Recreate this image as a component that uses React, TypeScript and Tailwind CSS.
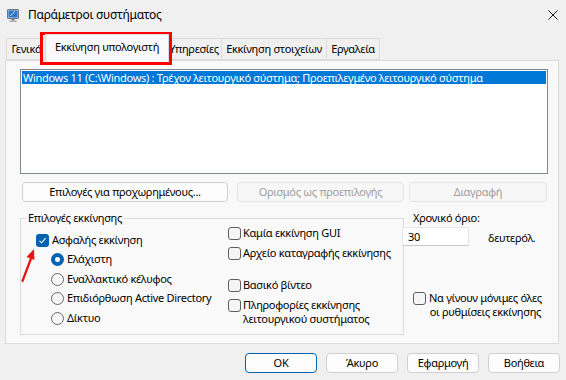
import React from 'react';

const font = { fontFamily: '"Noto Sans", "Liberation Sans", sans-serif' };

const CheckBox = ({ checked = false }: { checked?: boolean }) =>
  checked ? (
    <span className="flex h-[13px] w-[13px] shrink-0 items-center justify-center rounded-[3px] bg-[#0063b1]">
      <svg width="9" height="9" viewBox="0 0 9 9">
        <path d="M1.5 4.8 L3.6 6.8 L7.6 2.2" fill="none" stroke="#fff" strokeWidth="1.1" />
      </svg>
    </span>
  ) : (
    <span className="block h-[13px] w-[13px] shrink-0 rounded-[3px] border border-[#5f5f5f] bg-[#f5f5f5]" />
  );

const Radio = ({ checked = false }: { checked?: boolean }) =>
  checked ? (
    <span className="flex h-[13px] w-[13px] shrink-0 items-center justify-center rounded-full bg-[#0063b1]">
      <span className="h-[5px] w-[5px] rounded-full bg-white" />
    </span>
  ) : (
    <span className="block h-[13px] w-[13px] shrink-0 rounded-full border border-[#6a6a6a] bg-[#f5f5f5]" />
  );

const Button = ({
  label,
  w,
  disabled = false,
  primary = false,
}: {
  label: string;
  w: string;
  disabled?: boolean;
  primary?: boolean;
}) => (
  <div
    className={
      'flex h-[20px] shrink-0 items-center justify-center whitespace-nowrap rounded-[4px] border ' +
      w +
      (disabled
        ? ' border-[#e3e3e3] bg-[#f7f7f7] text-[#9d9d9d]'
        : primary
          ? ' border-[#0063b1] bg-[#fdfdfd] text-black'
          : ' border-[#d0d0d0] bg-[#fdfdfd] text-black')
    }
  >
    {label}
  </div>
);

const Tab = ({ label, w, active = false }: { label: string; w: string; active?: boolean }) =>
  active ? (
    <div
      className={
        'relative z-10 -mb-px -ml-[2px] flex h-[27px] shrink-0 items-center justify-center whitespace-nowrap border border-b-0 border-[#dcdcdc] bg-[#f9f9f9] pb-[3px] ' +
        w
      }
    >
      {label}
    </div>
  ) : (
    <div
      className={
        'flex h-[22px] shrink-0 items-center justify-center whitespace-nowrap border border-[#dcdcdc] bg-[#f0f0f0] ' +
        w
      }
    >
      {label}
    </div>
  );

export default function App() {
  return (
    <div
      className="relative flex h-[380px] w-[566px] flex-col overflow-hidden bg-[#f0f0f0] text-[11px] leading-[14px] tracking-[-0.3px] whitespace-nowrap text-black"
      style={font}
    >
      {/* title bar */}
      <div className="flex h-[30px] shrink-0 items-center pl-[7px]">
        <svg width="12" height="13" viewBox="0 0 12 13">
          <rect x="0.5" y="0.5" width="11" height="9" rx="0.5" fill="#cfd6df" stroke="#6f7782" />
          <rect x="1.5" y="1.5" width="9" height="7" fill="#2f73c9" />
          <path d="M3 7 L8 2.5" stroke="#cfe6ff" strokeWidth="1" />
          <rect x="4.5" y="10" width="3" height="1.5" fill="#7c838c" />
          <rect x="2.5" y="11.5" width="7" height="1.3" fill="#9aa1a9" />
        </svg>
        <span className="ml-[9px] text-[12px] tracking-[-0.3px]">Παράμετροι συστήματος</span>
        <svg className="ml-auto mr-[8px]" width="10" height="10" viewBox="0 0 10 10">
          <path d="M0.5 0.5 L9.5 9.5 M9.5 0.5 L0.5 9.5" stroke="#1b1b1b" strokeWidth="1" />
        </svg>
      </div>

      {/* tabs */}
      <div className="ml-[6px] flex h-[30px] shrink-0 items-end">
        <Tab label="Γενικά" w="w-[41px]" />
        <Tab label="Εκκίνηση υπολογιστή" w="w-[124px]" active />
        <div className="-ml-[2px] flex">
          <Tab label="Υπηρεσίες" w="w-[55px] border-l-0" />
          <Tab label="Εκκίνηση στοιχείων" w="w-[105px] border-l-0" />
          <Tab label="Εργαλεία" w="w-[53px] border-l-0" />
        </div>
      </div>

      {/* tab panel */}
      <div className="ml-[5px] flex h-[284px] w-[554px] shrink-0 flex-col border border-[#dcdcdc] bg-[#f9f9f9]">
        <div className="ml-[14px] mt-[8px] h-[105px] w-[528px] overflow-hidden border border-[#828790] bg-white p-px">
          <div className="h-[13px] bg-[#0078d7] pl-[1px] leading-[13px] text-white">
            Windows 11 (C:\Windows) : Τρέχον λειτουργικό σύστημα; Προεπιλεγμένο λειτουργικό σύστημα
          </div>
        </div>

        <div className="mt-[8px] flex pl-[16px]">
          <Button label="Επιλογές για προχωρημένους..." w="w-[206px]" />
          <div className="ml-[9px]">
            <Button label="Ορισμός ως προεπιλογής" w="w-[167px]" disabled />
          </div>
          <div className="ml-[5px]">
            <Button label="Διαγραφή" w="w-[138px]" disabled />
          </div>
        </div>

        <div className="mt-[9px] flex">
          <fieldset className="ml-[14px] h-[124px] w-[384px] shrink-0 border border-[#dcdcdc]">
            <legend className="ml-[5px] px-[2px] leading-[14px]">Επιλογές εκκίνησης</legend>
            <div className="flex">
              <div className="flex w-[207px] shrink-0 flex-col pl-[15px] pt-[8px]">
                <div className="flex h-[14px] items-center gap-[3px]">
                  <CheckBox checked />
                  <span>Ασφαλής εκκίνηση</span>
                </div>
                <div className="mt-[5px] flex h-[14px] items-center gap-[3px] pl-[15px]">
                  <Radio checked />
                  <span>Ελάχιστη</span>
                </div>
                <div className="mt-[6px] flex h-[14px] items-center gap-[3px] pl-[15px]">
                  <Radio />
                  <span>Εναλλακτικό κέλυφος</span>
                </div>
                <div className="mt-[5px] flex h-[14px] items-center gap-[3px] pl-[15px]">
                  <Radio />
                  <span>Επιδιόρθωση Active Directory</span>
                </div>
                <div className="mt-[6px] flex h-[14px] items-center gap-[3px] pl-[15px]">
                  <Radio />
                  <span>Δίκτυο</span>
                </div>
              </div>

              <div className="flex flex-col pt-[1px]">
                <div className="flex h-[14px] items-center gap-[2px]">
                  <CheckBox />
                  <span>Καμία εκκίνηση GUI</span>
                </div>
                <div className="mt-[6px] flex h-[14px] items-center gap-[2px]">
                  <CheckBox />
                  <span>Αρχείο καταγραφής εκκίνησης</span>
                </div>
                <div className="mt-[18px] flex h-[14px] items-center gap-[2px]">
                  <CheckBox />
                  <span>Βασικό βίντεο</span>
                </div>
                <div className="mt-[6px] flex items-start gap-[2px]">
                  <span className="mt-px shrink-0">
                    <CheckBox />
                  </span>
                  <span className="leading-[14px]">
                    Πληροφορίες εκκίνησης
                    <br />
                    λειτουργικού συστήματος
                  </span>
                </div>
              </div>
            </div>
          </fieldset>

          <div className="flex flex-col">
            <div className="pl-[9px]">Χρονικό όριο:</div>
            <div className="mt-[2px] flex items-center">
              <div className="relative z-10 -ml-[2px] flex h-[19px] w-[67px] shrink-0 items-center border border-[#e6e6e6] border-b-[#c8c8c8] bg-white pl-[5px]">
                30
              </div>
              <span className="ml-[19px] mt-[2px]">δευτερόλ.</span>
            </div>
            <div className="mt-[45px] flex items-start gap-[3px] pl-[9px]">
              <span className="mt-px shrink-0">
                <CheckBox />
              </span>
              <span className="text-center leading-[14px]">
                Να γίνουν μόνιμες όλες
                <br />
                οι ρυθμίσεις εκκίνησης
              </span>
            </div>
          </div>
        </div>
      </div>

      {/* dialog buttons */}
      <div className="mt-[9px] flex justify-end gap-[9px] pr-[6px]">
        <Button label="OK" w="w-[72px]" primary />
        <Button label="Άκυρο" w="w-[72px]" />
        <Button label="Εφαρμογή" w="w-[72px]" />
        <Button label="Βοήθεια" w="w-[72px]" />
      </div>

      {/* annotations */}
      <div className="pointer-events-none absolute left-[40px] top-[32px] h-[33px] w-[132px] border-[3px] border-[#ff0000]" />
      <svg className="pointer-events-none absolute left-0 top-0" width="60" height="300" viewBox="0 0 60 300">
        <path d="M22.5 281 L30.8 259" stroke="#ee1111" strokeWidth="2.2" strokeLinecap="round" />
        <path d="M34 249 L34.4 259.9 L26.6 256.9 Z" fill="#ee1111" />
      </svg>
    </div>
  );
}
